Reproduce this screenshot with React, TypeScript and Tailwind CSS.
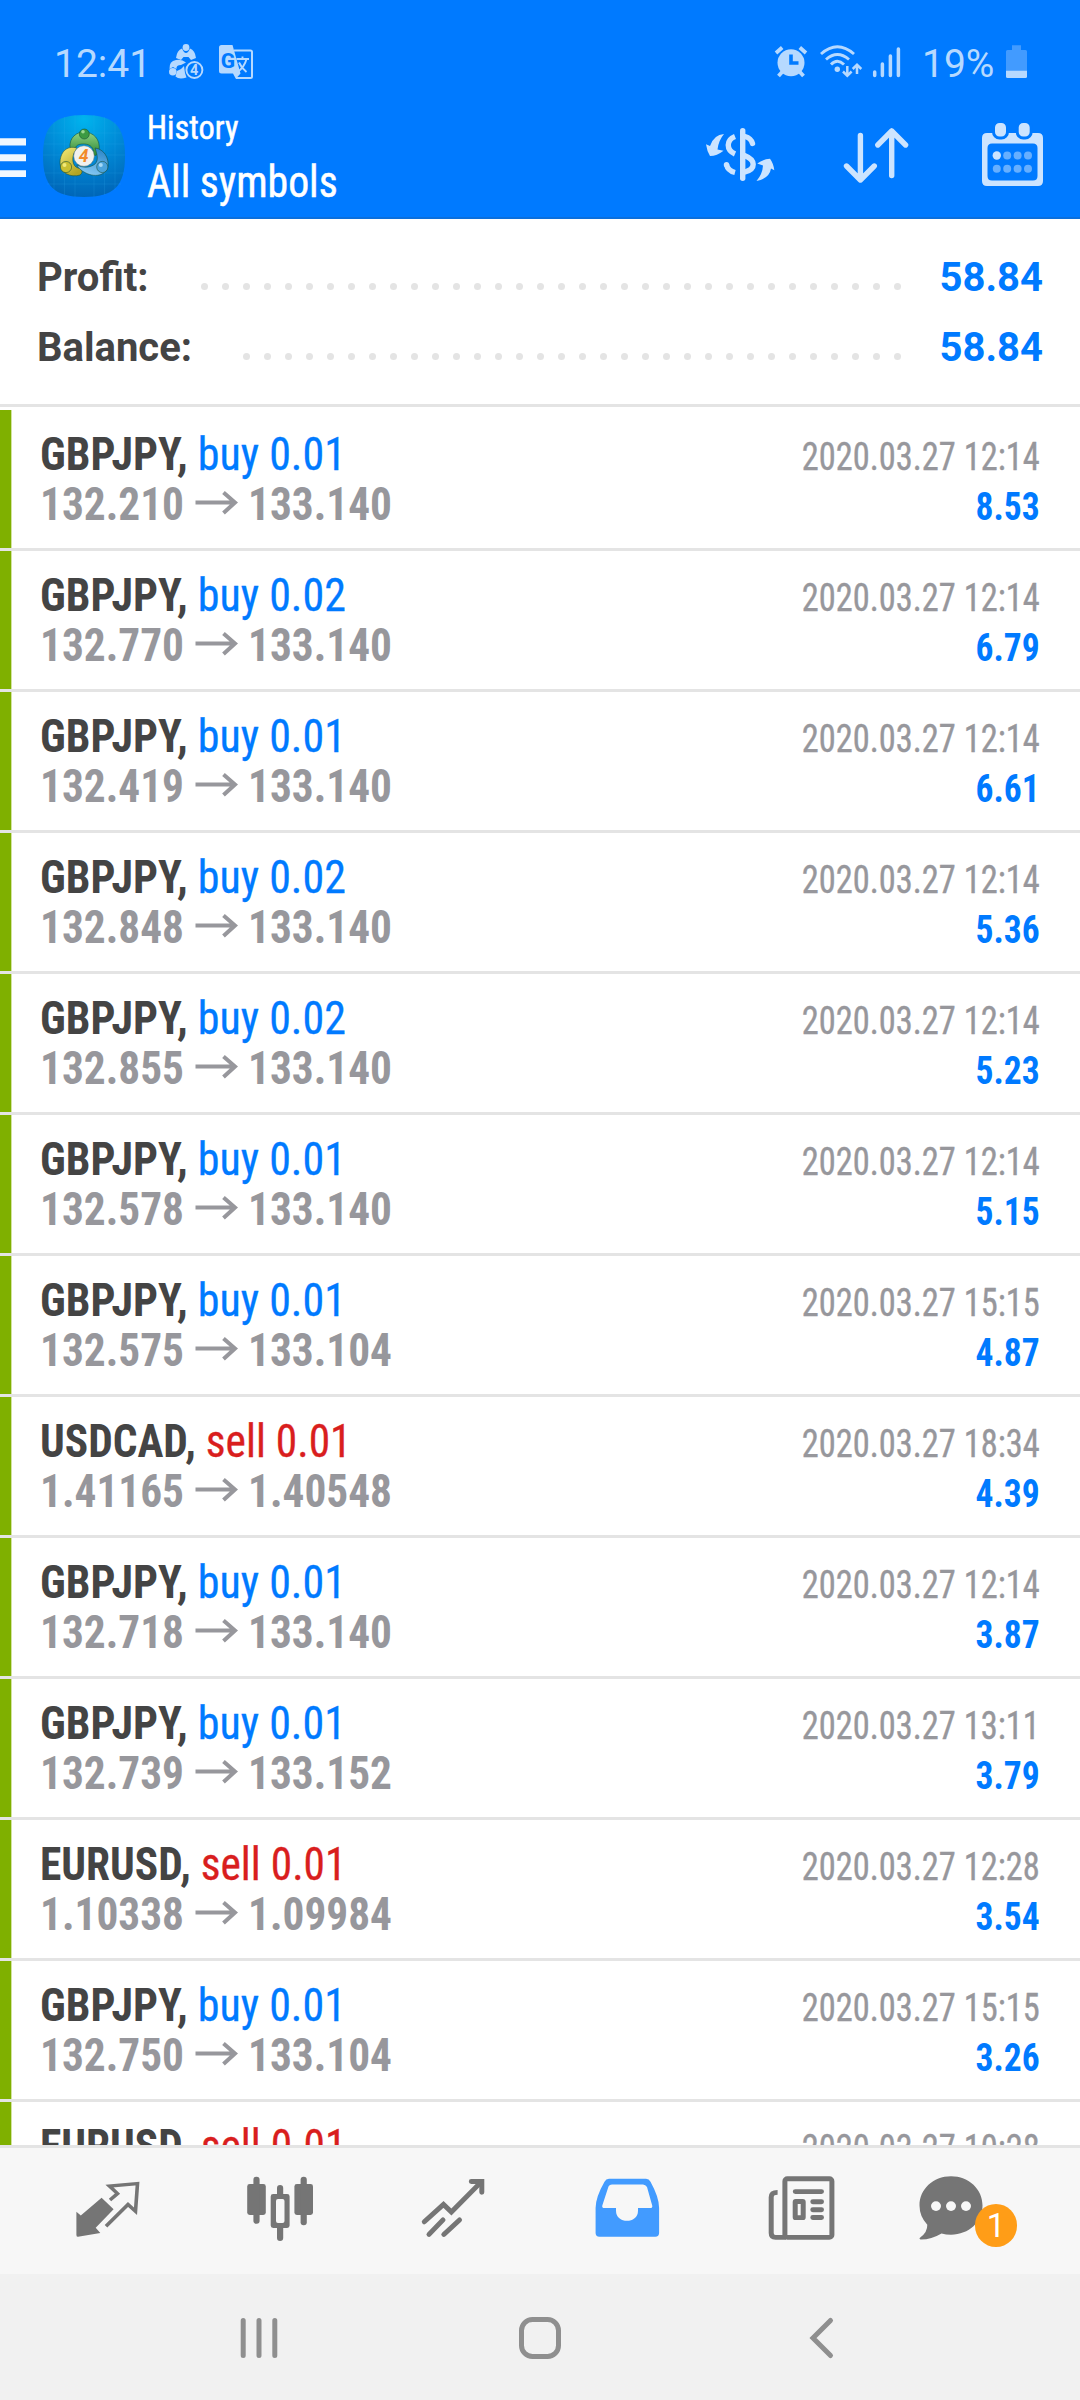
import React from "react"

type Deal = {
  symbol: string
  side: "buy" | "sell"
  lot: string
  open: string
  close: string
  time: string
  profit: string
}

const deals: Deal[] = [
  { symbol: "GBPJPY", side: "buy", lot: "0.01", open: "132.210", close: "133.140", time: "2020.03.27 12:14", profit: "8.53" },
  { symbol: "GBPJPY", side: "buy", lot: "0.02", open: "132.770", close: "133.140", time: "2020.03.27 12:14", profit: "6.79" },
  { symbol: "GBPJPY", side: "buy", lot: "0.01", open: "132.419", close: "133.140", time: "2020.03.27 12:14", profit: "6.61" },
  { symbol: "GBPJPY", side: "buy", lot: "0.02", open: "132.848", close: "133.140", time: "2020.03.27 12:14", profit: "5.36" },
  { symbol: "GBPJPY", side: "buy", lot: "0.02", open: "132.855", close: "133.140", time: "2020.03.27 12:14", profit: "5.23" },
  { symbol: "GBPJPY", side: "buy", lot: "0.01", open: "132.578", close: "133.140", time: "2020.03.27 12:14", profit: "5.15" },
  { symbol: "GBPJPY", side: "buy", lot: "0.01", open: "132.575", close: "133.104", time: "2020.03.27 15:15", profit: "4.87" },
  { symbol: "USDCAD", side: "sell", lot: "0.01", open: "1.41165", close: "1.40548", time: "2020.03.27 18:34", profit: "4.39" },
  { symbol: "GBPJPY", side: "buy", lot: "0.01", open: "132.718", close: "133.140", time: "2020.03.27 12:14", profit: "3.87" },
  { symbol: "GBPJPY", side: "buy", lot: "0.01", open: "132.739", close: "133.152", time: "2020.03.27 13:11", profit: "3.79" },
  { symbol: "EURUSD", side: "sell", lot: "0.01", open: "1.10338", close: "1.09984", time: "2020.03.27 12:28", profit: "3.54" },
  { symbol: "GBPJPY", side: "buy", lot: "0.01", open: "132.750", close: "133.104", time: "2020.03.27 15:15", profit: "3.26" },
]

const StatusBar = () => {
  return (
    <div className="flex h-[104px] pt-[38px] font-[Roboto] text-[39px] leading-[52px] text-[#b6d9ff]">
      <span className="ml-[54px] w-[106px] whitespace-nowrap">12:41</span>
      <svg className="h-[52px] w-[100px]" viewBox="160 38 100 52" fill="#b6d9ff">
        {/* terminal notification */}
        <circle cx="186" cy="47.5" r="3.4" />
        <path d="M176 58 Q177 50 182 48.5 Q184 53 186 53 Q188 53 190 48.5 Q195 50 196 58 L191 60 L188.5 57 L183.5 57 L181 60Z" />
        <path d="M169.5 69 Q169 61 176 60 Q182 59 186 62.5 L181 65 Q176 65 176.5 69 L173 67Z" />
        <circle cx="172.8" cy="71.8" r="3.8" />
        <path d="M177 71 Q181 70 184 66 L185 73 L186.5 77.5 Q179 80 175.5 76.5Z" />
        <circle cx="194.4" cy="70" r="8" fill="#007aff" stroke="#b6d9ff" strokeWidth="1.9" />
        <text x="194.2" y="75.2" textAnchor="middle" fontFamily="Roboto" fontSize="14.5" fontWeight="700">4</text>
        {/* translate notification */}
        <path d="M234 50.5 H250.5 Q252 50.5 252 52 V76.5 Q252 78 250.5 78 H236" fill="none" stroke="#b6d9ff" strokeWidth="2" />
        <path d="M221.5 45 H232.5 L240.5 73.5 L235.8 78.8 L233 73.5 H221.5 Q219 73.5 219 71 V47.5 Q219 45 221.5 45Z" />
        <text x="227.8" y="67.5" textAnchor="middle" fontFamily="Roboto" fontSize="21" fontWeight="800" fill="#007aff">G</text>
        <path d="M236.5 59 H249 M242.5 56.5 V59 M246.5 59 Q244.5 67 237.5 72 M239 62.5 Q241.5 68 246.5 72" fill="none" stroke="#b6d9ff" strokeWidth="1.9" />
      </svg>
      <div className="flex-1" />
      <svg className="h-[52px] w-[135px]" viewBox="770 38 135 52" fill="none" stroke="#b6d9ff">
        {/* alarm */}
        <circle cx="791" cy="62.7" r="13.5" fill="#b6d9ff" stroke="none" />
        <path d="M776 53 L782.2 47.5 M806 53 L799.8 47.5 M778.5 76 L783 71 M803.5 76 L799 71" strokeWidth="3.8" />
        <path d="M791 54.5 V63 H798.5" stroke="#007aff" strokeWidth="3.6" />
        {/* wifi */}
        <path d="M821 54 Q837.3 39.5 854 54 M826 59.5 Q837.3 49.5 849 59.5 M831 64.5 Q837.3 58 844 64.5" strokeWidth="2.9" />
        <circle cx="837.3" cy="69.3" r="2.7" fill="#b6d9ff" stroke="none" />
        <path d="M847.3 66 V75.5 M843 71.5 L847.3 75.8 L851.6 71.5 M857 74 V65 M852.7 69 L857 64.7 L861.3 69" strokeWidth="2.5" />
        {/* signal */}
        <path d="M874.7 72 V75.5 M882.4 64 V75.5 M890.4 56 V75.5 M898.4 49 V75.5" strokeWidth="3.5" strokeLinecap="round" />
      </svg>
      <span className="ml-[17px] w-[79px] whitespace-nowrap">19%</span>
      <svg className="mr-[49px] h-[52px] w-[30px]" viewBox="1001 38 30 52">
        <path d="M1012 45.3 H1021 V50 H1025.5 Q1027 50 1027 51.5 V71 H1006 V51.5 Q1006 50 1007.5 50 H1012Z" fill="#429bff" />
        <path d="M1006 70.7 H1027 V76.5 Q1027 78 1025.5 78 H1007.5 Q1006 78 1006 76.5Z" fill="#b6d9ff" />
      </svg>
    </div>
  )
}

const Logo = () => {
  return (
    <svg className="h-[113px] w-[147px] shrink-0" viewBox="0 104 147 113">
      <defs>
        <radialGradient id="bg" cx="0.5" cy="0.05" r="1">
          <stop offset="0" stopColor="#00b4ee" />
          <stop offset="0.5" stopColor="#0089d6" />
          <stop offset="1" stopColor="#0062b4" />
        </radialGradient>
        <linearGradient id="green" x1="0" y1="0" x2="0" y2="1">
          <stop offset="0" stopColor="#93d483" />
          <stop offset="1" stopColor="#278534" />
        </linearGradient>
        <linearGradient id="yellow" x1="0" y1="0" x2="0.6" y2="1">
          <stop offset="0" stopColor="#f5ed7a" />
          <stop offset="1" stopColor="#b3a423" />
        </linearGradient>
        <linearGradient id="blue" x1="0.7" y1="0" x2="0.3" y2="1">
          <stop offset="0" stopColor="#2b86c8" />
          <stop offset="1" stopColor="#8acbf5" />
        </linearGradient>
      </defs>
      <path d="M0 138.3 H26 V145.5 H0Z M0 154.3 H26 V161.3 H0Z M0 170.3 H26 V177 H0Z" fill="#f0f7ff" />
      <path d="M84 115 C114 115 125 126 125 156 C125 186 114 197 84 197 C54 197 43 186 43 156 C43 126 54 115 84 115Z" fill="url(#bg)" />
      <path d="M54 122 V190 M64.5 117 V195 M75 115 V197 M94 115 V197 M104.5 117 V195 M115 122 V190 M47 133 H121 M44 144 H124 M43 155 H125 M44 173 H124 M47 184 H121" stroke="#39b4f0" strokeOpacity="0.16" strokeWidth="1" />
      <g stroke="#124b35" strokeOpacity="0.6" strokeWidth="0.9">
        <path d="M70 148 C69 137 77 132 84 132 C93 132 101 139 99 151 C98 154 95 157 93 155 C95 148 90 144 84 144 C77 144 76 146 75 149Z" fill="url(#green)" />
        <path d="M77 148 C66 145 60 153 60 163 C60 173 71 178 80 175 C83 173 83 169 78 168 C72 166 72 158 74 153Z" fill="url(#yellow)" />
        <path d="M95 148 C104 149 109 158 108 166 C106 176 94 178 84 172 C79 169 77 166 77 165 C83 168 90 168 95 164 C99 160 97 154 95 148Z" fill="url(#blue)" />
        <circle cx="84.3" cy="134" r="5" fill="#3c9a42" />
        <circle cx="66" cy="167" r="5.6" fill="#c9bf32" />
        <circle cx="102.3" cy="167" r="5.6" fill="#4ba3dc" />
      </g>
      <circle cx="83" cy="131.8" r="1.8" fill="#9ad890" />
      <circle cx="64.5" cy="165" r="2" fill="#f0e97a" />
      <circle cx="100.8" cy="165" r="2" fill="#a5d9f7" />
      <circle cx="84" cy="156" r="10.3" fill="#f1f1ee" stroke="#6c7c76" strokeWidth="0.5" />
      <text x="83.7" y="162.3" textAnchor="middle" fontFamily="Roboto" fontSize="17.5" fontWeight="700" fontStyle="italic" fill="#f28a2a">4</text>
    </svg>
  )
}

const Header = () => {
  return (
    <header className="h-[219px] border-b-2 border-[#0b6fdc] bg-[#007aff]">
      <StatusBar />
      <div className="flex h-[113px] pr-[28px]">
        <Logo />
        <div className="flex-1 whitespace-nowrap pt-[3px] font-['Roboto_Condensed',Roboto] text-white [-webkit-text-stroke:0.5px]">
          <p className="origin-left scale-x-[0.952] text-[34px] leading-[40px]">History</p>
          <h1 className="origin-left scale-x-[0.927] text-[45px] leading-[69px]">All symbols</h1>
        </div>
        {/* symbol */}
        <svg className="h-[113px] w-[88px]" viewBox="696 104 88 113" fill="none" stroke="#cce4ff" strokeWidth="5.4" strokeLinecap="round">
          <path d="M742.7 130.7 V178.2" />
          <path d="M745 136.5 Q751 138 752.5 143.5 M744.5 155.5 C756 160 756 169 745 172" />
          <path d="M735 136.5 C726 140 726 150 735 154 M726.5 164.5 C727.5 169.5 731 171.5 735 172.5" strokeLinecap="butt" />
          <circle cx="726.5" cy="164.8" r="2.7" fill="#cce4ff" stroke="none" />
          <path d="M724 134 Q714 134.5 710 146 L706 144.3 Q707 151.5 710 156 Q717 156 723.5 150.8 L717.5 149.5 Q718.5 140.5 724 134Z" fill="#cce4ff" stroke="none" />
          <path d="M756.5 181 Q769.5 178.5 771 168.5 L774.3 170.3 Q773.5 163.5 770 158.8 Q763.5 159 757.2 163.5 L763 165.5 Q762.5 174 756.5 181Z" fill="#cce4ff" stroke="none" />
        </svg>
        {/* sort */}
        <svg className="ml-[50px] h-[113px] w-[84px]" viewBox="834 104 84 113" fill="none" stroke="#cce4ff" strokeWidth="5.4" strokeLinecap="round" strokeLinejoin="round">
          <path d="M860.4 135.5 V180 M846.5 166 L860.4 180 L874.3 166" />
          <path d="M891.7 175.5 V131 M877.8 145 L891.7 131 L905.6 145" />
        </svg>
        {/* calendar */}
        <svg className="ml-[54px] h-[113px] w-[80px]" viewBox="972 104 80 113" fill="#cce4ff">
          <path fillRule="evenodd" d="M987 133 H1038 Q1043 133 1043 138 V181 Q1043 186 1038 186 H987 Q982 186 982 181 V138 Q982 133 987 133Z M992 143.5 Q987.5 143.5 987.5 148 V176 Q987.5 180.5 992 180.5 H1033 Q1037.5 180.5 1037.5 176 V148 Q1037.5 143.5 1033 143.5Z" />
          <rect x="993.5" y="121.5" width="14" height="16.5" rx="6" stroke="#007aff" strokeWidth="3" />
          <rect x="1017.2" y="121.5" width="14" height="16.5" rx="6" stroke="#007aff" strokeWidth="3" />
          <circle cx="996.8" cy="155.5" r="4.2" />
          <g fill="#66afff">
            <circle cx="1007.2" cy="155.5" r="4" />
            <circle cx="1017.6" cy="155.5" r="4" />
            <circle cx="1028" cy="155.5" r="4" />
            <circle cx="996.8" cy="168.8" r="4" />
            <circle cx="1007.2" cy="168.8" r="4" />
            <circle cx="1017.6" cy="168.8" r="4" />
            <circle cx="1028" cy="168.8" r="4" />
          </g>
        </svg>
      </div>
    </header>
  )
}

const SummaryRow = ({ label, value, dots }: { label: string; value: string; dots: number }) => {
  return (
    <div className="flex h-[70px] items-center px-[37px] font-[Roboto] text-[40px] font-bold leading-[70px]">
      <span className="text-[#444444]">{label}</span>
      <div className="mt-[16px] flex flex-1 justify-end gap-[14px] pr-[38px]">
        {Array.from({ length: dots }).map((_, i) => (
          <span key={i} className="size-[7px] rounded-full bg-[#e4e4e4]" />
        ))}
      </div>
      <span className="w-[104px] text-right text-[#007aff]">{value}</span>
    </div>
  )
}

const DealRow = ({ deal }: { deal: Deal }) => {
  const buy = deal.side === "buy"
  return (
    <li className="h-[141px] border-b-[3px] border-[#e4e4e4]">
      <div className="flex h-[138px] justify-between whitespace-nowrap border-l-[11px] border-[#7fb000] pr-[40px]">
        <div className="border-l border-[#d3e3a0] pl-[28px] pt-[19px] text-[46px] leading-[50px]">
          <p className={buy ? "origin-left scale-x-[0.956]" : "origin-left scale-x-[0.943]"}>
            <span className="font-bold text-[#444444]">{deal.symbol},</span>{" "}
            <span className={buy ? "text-[#007aff] [-webkit-text-stroke:0.3px]" : "text-[#d91e1e] [-webkit-text-stroke:0.3px]"}>
              {deal.side} {deal.lot}
            </span>
          </p>
          <p className="flex font-bold text-[#97979c]">
            <span className="w-[144px] origin-left scale-x-[0.942]">{deal.open}</span>
            <svg className="ml-[11px] h-[50px] w-[43px]" viewBox="195 479 43 50" fill="none" stroke="#97979c" strokeWidth="4">
              <path d="M195.5 502.5 H234 M223.5 492.5 L235 502.5 L223.5 513" />
            </svg>
            <span className="ml-[10px] w-[144px] origin-left scale-x-[0.942]">{deal.close}</span>
          </p>
        </div>
        <div className="pt-[22px] text-right text-[39px] leading-[50px]">
          <p className="origin-right scale-x-[0.882] text-[#97979c] [-webkit-text-stroke:0.4px]">{deal.time}</p>
          <p className="origin-right scale-x-[0.911] font-bold text-[#007aff]">{deal.profit}</p>
        </div>
      </div>
    </li>
  )
}

const TabBar = () => {
  return (
    <nav className="flex h-[129px] border-t-[3px] border-[#e4e4e4] bg-[#f7f7f7] pl-[21px]">
      {/* quotes */}
      <svg className="h-[126px] w-[173px]" viewBox="21 2150.2 173 130.2" preserveAspectRatio="none" fill="none" stroke="#757575" strokeWidth="3.6">
        <path d="M110 2204 L117.5 2197.3 L109.5 2189.5 L137.5 2187 L135.5 2215.5 L128 2208.5 L106 2231" />
        <path d="M76.4 2216 L80.8 2220 L101.6 2201.5 L113.6 2213.6 L95.7 2232.5 L100.3 2238 L78 2242 Q76.4 2242 76.4 2240Z" fill="#757575" stroke="none" />
      </svg>
      {/* charts */}
      <svg className="h-[126px] w-[173px]" viewBox="194 2150.2 173 130.2" preserveAspectRatio="none" fill="#757575">
        <rect x="247.2" y="2187.4" width="18.6" height="32" rx="2.5" />
        <rect x="253.4" y="2180" width="6.2" height="48.5" rx="3" />
        <rect x="294.4" y="2187.4" width="18.6" height="32" rx="2.5" />
        <rect x="300.6" y="2180" width="6.2" height="50" rx="3" />
        <path fillRule="evenodd" d="M273.2 2197.8 H287.1 Q289.6 2197.8 289.6 2200.3 V2230.4 Q289.6 2232.9 287.1 2232.9 H273.2 Q270.7 2232.9 270.7 2230.4 V2200.3 Q270.7 2197.8 273.2 2197.8Z M278 2203 Q276 2203 276 2205 V2225.7 Q276 2227.7 278 2227.7 H282.5 Q284.5 2227.7 284.5 2225.7 V2205 Q284.5 2203 282.5 2203Z" />
        <path d="M277 2198 V2191.5 Q277 2188.5 280.1 2188.5 Q283.2 2188.5 283.2 2191.5 V2198Z M277 2232.5 V2243.3 Q277 2246.3 280.1 2246.3 Q283.2 2246.3 283.2 2243.3 V2232.5Z" />
      </svg>
      {/* trade */}
      <svg className="h-[126px] w-[173px]" viewBox="367 2150.2 173 130.2" preserveAspectRatio="none" fill="none" stroke="#757575" strokeWidth="5" strokeLinecap="round">
        <path d="M424.3 2226.5 L443.5 2208.5 L451.4 2216.3 L481 2185.5" />
        <path d="M471.3 2184.8 H481.8 V2196" />
        <path d="M429 2239.5 L443 2224.5 M443.8 2239.5 L459.5 2224.5" />
      </svg>
      {/* history */}
      <svg className="h-[126px] w-[173px]" viewBox="540 2150.2 173 130.2" preserveAspectRatio="none">
        <path fillRule="evenodd" fill="#429bff" d="M609 2182 H646 Q649 2182 650.5 2185 Q659.1 2201 659.1 2212 V2238 Q659.1 2241.8 655.3 2241.8 H599.4 Q595.6 2241.8 595.6 2238 V2212 Q595.6 2201 604.5 2185 Q606 2182 609 2182Z M612 2187.8 Q609.5 2187.8 608.5 2190 L602.3 2209.5 Q601.8 2212.3 604.5 2212.3 H616 V2215 C616 2229 638 2229 638 2215 V2212.3 H650 Q652.8 2212.3 652.2 2209.5 L647 2190.5 Q645.5 2187.8 643 2187.8Z" />
      </svg>
      {/* news */}
      <svg className="h-[126px] w-[173px]" viewBox="713 2150.2 173 130.2" preserveAspectRatio="none" fill="none" stroke="#757575" strokeWidth="5">
        <rect x="784.9" y="2182" width="47" height="60.5" rx="2.5" />
        <path d="M777.6 2196 Q771.2 2196 771.2 2201 V2238 Q771.2 2242.5 775.5 2242.5 H786" />
        <path d="M795.3 2195.2 H821.5 M812.8 2205.7 H821.5 M812.8 2214 H821.5 M812.8 2222 H821.5" strokeLinecap="round" />
        <rect x="795.2" y="2205.5" width="8" height="16.7" rx="0.5" />
      </svg>
      {/* messages */}
      <div className="relative h-[126px] w-[173px]">
        <svg className="h-[126px] w-[173px]" viewBox="886 2150.2 173 130.2" preserveAspectRatio="none">
          <path fill="#757575" d="M951 2179.5 C969 2179.5 982.5 2193 982.5 2209.7 C982.5 2226.5 969 2239.8 951 2239.8 Q946 2239.8 941.5 2238.5 Q931 2245 920.5 2244.8 Q918.5 2244 920.5 2242.5 Q927.5 2237 927.3 2229.5 Q919.5 2221 919.5 2209.7 C919.5 2193 933 2179.5 951 2179.5Z" />
          <g fill="#f7f7f7">
            <circle cx="936" cy="2210.2" r="5" />
            <circle cx="951" cy="2210.2" r="5" />
            <circle cx="966" cy="2210.2" r="5" />
          </g>
        </svg>
        <span className="absolute left-[89px] top-[56px] h-[43px] w-[42px] rounded-full bg-[#ff9d17] text-center font-[Roboto] text-[33px] leading-[43px] text-white">
          1
        </span>
      </div>
    </nav>
  )
}

const SystemNav = () => {
  return (
    <div className="flex h-[126px] justify-center gap-[181px] bg-[#f1f1f1]">
      <svg className="h-[126px] w-[100px]" viewBox="209 2274 100 126" stroke="#8f8f8f" strokeWidth="5" strokeLinecap="round">
        <path d="M243.2 2320.5 V2355.5 M259 2320.5 V2355.5 M274.8 2320.5 V2355.5" />
      </svg>
      <svg className="h-[126px] w-[100px]" viewBox="490 2274 100 126" fill="none" stroke="#8f8f8f" strokeWidth="5">
        <rect x="521.5" y="2319.5" width="37" height="37" rx="11" />
      </svg>
      <svg className="h-[126px] w-[100px]" viewBox="771 2274 100 126" fill="none" stroke="#8f8f8f" strokeWidth="5" strokeLinecap="round">
        <path d="M830.5 2320.5 L813 2338 L830.5 2355.5" />
      </svg>
    </div>
  )
}

export default function App() {
  return (
    <div className="flex h-[2400px] w-[1080px] flex-col overflow-hidden bg-white font-['Roboto_Condensed',Roboto,sans-serif]">
      <Header />
      <section className="h-[191px] pt-[24px]">
        <SummaryRow label="Profit:" value="58.84" dots={34} />
        <SummaryRow label="Balance:" value="58.84" dots={32} />
        <div className="mt-[21px] h-[3px] bg-[#e4e4e4]" />
      </section>
      <ul className="h-[1735px] overflow-hidden">
        {deals.map((deal, i) => (
          <DealRow key={i} deal={deal} />
        ))}
        {/* partly scrolled under the tab bar */}
        <DealRow deal={{ symbol: "EURUSD", side: "sell", lot: "0.01", open: "", close: "", time: "2020.03.27 10:28", profit: "" }} />
      </ul>
      <TabBar />
      <SystemNav />
    </div>
  )
}
